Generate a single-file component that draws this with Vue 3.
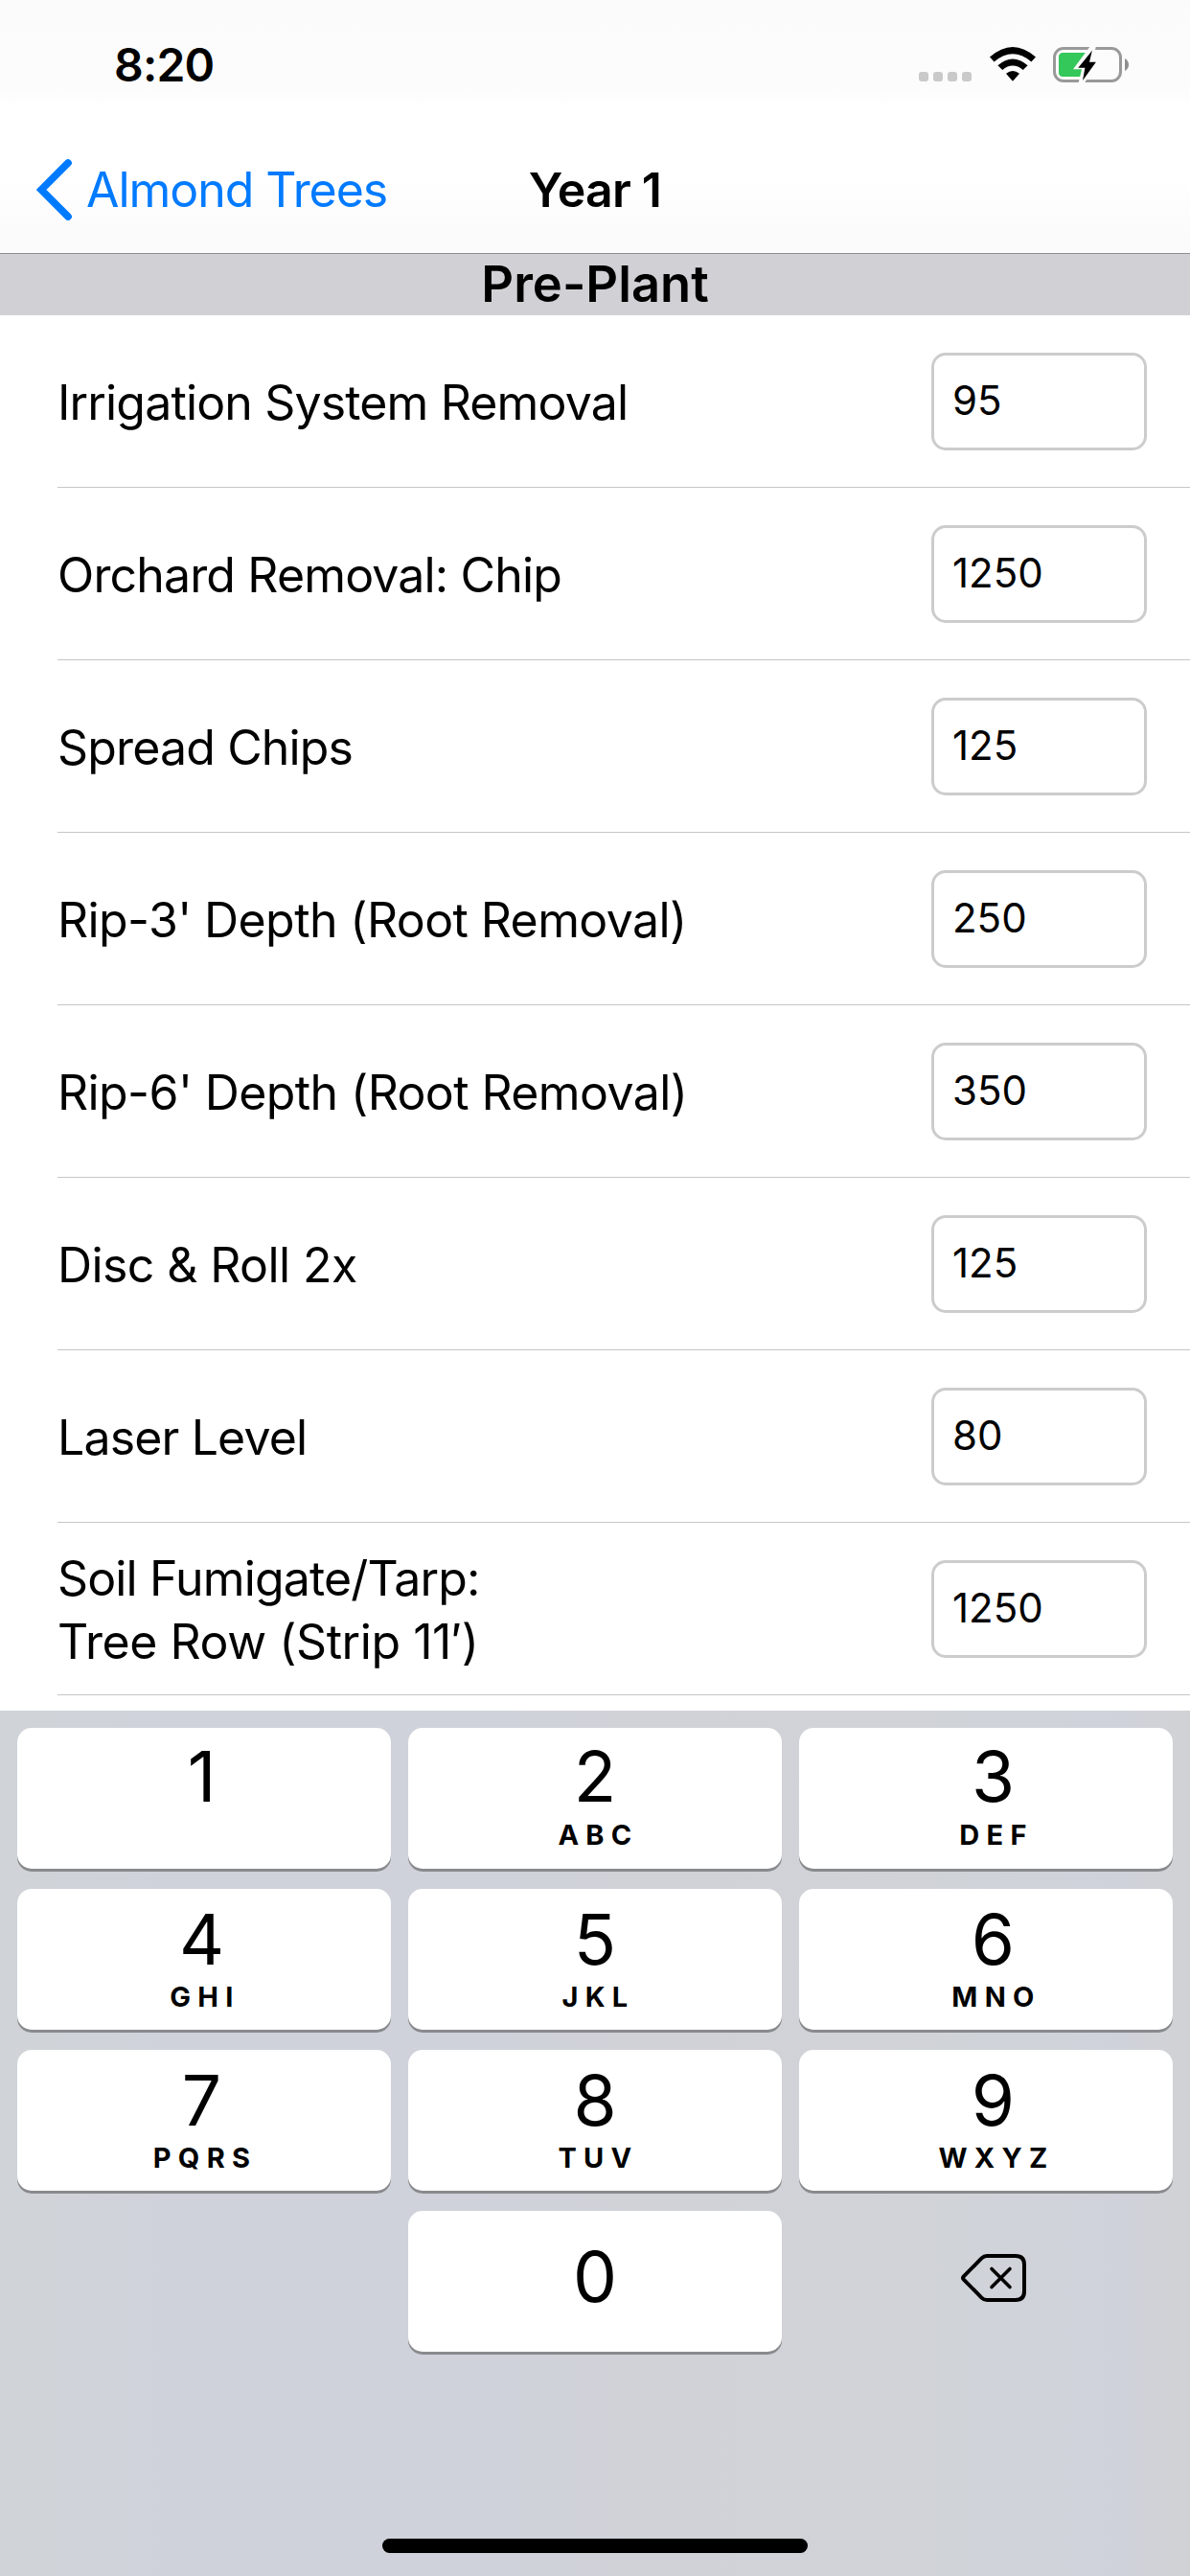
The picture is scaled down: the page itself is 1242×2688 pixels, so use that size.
<script setup>
const rows = [
  { lines: ['Irrigation System Removal'], value: '95' },
  { lines: ['Orchard Removal: Chip'], value: '1250' },
  { lines: ['Spread Chips'], value: '125' },
  { lines: ["Rip-3' Depth (Root Removal)"], value: '250', wide: true },
  { lines: ["Rip-6' Depth (Root Removal)"], value: '350', wide: true },
  { lines: ['Disc & Roll 2x'], value: '125', wide: true },
  { lines: ['Laser Level'], value: '80' },
  { lines: ['Soil Fumigate/Tarp:', 'Tree Row (Strip 11′)'], value: '1250' },
]
const keys = [
  ['1', ''], ['2', 'ABC'], ['3', 'DEF'],
  ['4', 'GHI'], ['5', 'JKL'], ['6', 'MNO'],
  ['7', 'PQRS'], ['8', 'TUV'], ['9', 'WXYZ'],
]
</script>

<template>
  <div class="screen">
    <header class="top">
      <div class="status">
        <span class="time">8:20</span>
        <div class="indicators">
          <div class="dots"><i v-for="n in 4" :key="n"></i></div>
          <svg class="wifi" width="48" height="36" viewBox="0 0 48 36">
            <path d="M0 10.6 Q24 -10.6 48 10.6 L43.4 15.4 Q24 -1 4.6 15.4Z" />
            <path d="M8.4 19.2 Q24 5.6 39.6 19.2 L34.8 24 Q24 15.2 13.2 24Z" />
            <path d="M17 27.8 Q24 22.2 31 27.8 L24.7 35 Q24 35.8 23.3 35Z" />
          </svg>
          <svg class="battery" width="80" height="38" viewBox="0 0 80 38">
            <rect x="1.5" y="1.5" width="69" height="34" rx="9.5" fill="none" stroke="#999" stroke-width="3" />
            <path d="M75 12 Q79 14.5 79 18.5 Q79 22.5 75 25Z" fill="#8f8f8f" />
            <path d="M10.5 6 H39 L31 31 H10.5 Q6 31 6 26.5 V10.5 Q6 6 10.5 6Z" fill="#34c759" />
            <path d="M39 -1 L21 23.2 H30 L26.5 38 H32.5 L49 13.5 H41.2 L45 -1Z" fill="#fcfcfc" />
            <path d="M40.9 3.7 L26.3 21.7 H33.4 L31 35 L44.9 15.7 H38Z" />
          </svg>
        </div>
      </div>
      <nav class="nav">
        <a class="back">
          <svg width="37" height="64" viewBox="0 0 37 64"><path d="M33 4 L5 32 L33 60" fill="none" stroke="#007aff" stroke-width="7.6" stroke-linecap="round" stroke-linejoin="miter" /></svg>
          <span>Almond Trees</span>
        </a>
        <h1>Year 1</h1>
        <span></span>
      </nav>
    </header>

    <h2 class="section">Pre-Plant</h2>

    <main class="list">
      <div v-for="row in rows" :key="row.lines[0]" class="row">
        <div class="label" :class="{ wide: row.wide }">
          <div v-for="line in row.lines" :key="line">{{ line }}</div>
        </div>
        <div class="field">{{ row.value }}</div>
      </div>
    </main>

    <section class="keyboard">
      <div class="keys">
        <button v-for="[digit, letters] in keys" :key="digit" class="key">
          <span class="digit">{{ digit }}</span>
          <span class="letters">{{ letters }}</span>
        </button>
        <div></div>
        <button class="key zero"><span class="digit">0</span></button>
        <div class="delete">
          <svg width="68" height="50" viewBox="0 0 68 50" fill="none" stroke="#000" stroke-linecap="round" stroke-linejoin="round">
            <path d="M27 2 H57 Q66 2 66 11 V39 Q66 48 57 48 H27 Q24 48 21.5 45.6 L2.8 26.6 Q1.3 25 2.8 23.4 L21.5 4.4 Q24 2 27 2Z" stroke-width="4" />
            <path d="M32 15.5 L51 34.5 M51 15.5 L32 34.5" stroke-width="3.6" />
          </svg>
        </div>
      </div>
      <div class="home"></div>
    </section>
  </div>
</template>

<style>
body { margin: 0; background: #fff; }
</style>

<style scoped>
* { box-sizing: border-box; }
.screen {
  width: 1242px;
  height: 2688px;
  display: flex;
  flex-direction: column;
  overflow: hidden;
  background: #fff;
  color: #000;
  font-family: Inter, "Liberation Sans", sans-serif;
}
.top {
  height: 265px;
  flex: none;
  border-bottom: 1px solid #8e8e93;
  background: linear-gradient(#fbfbfb, #fcfcfc 95px, #fff 112px, #fff 185px, #fbfbfb 240px);
}
.status {
  height: 132px;
  display: flex;
  justify-content: space-between;
  padding: 0 63px 0 119px;
}
.time {
  font-size: 48px;
  font-weight: 600;
  line-height: 136px;
  letter-spacing: -0.8px;
}
.indicators { display: flex; padding-top: 49px; }
.dots { display: flex; gap: 5px; padding-top: 26px; }
.dots i { width: 10px; height: 10px; border-radius: 3px; background: #c9c9c9; }
.wifi { margin-left: 19px; }
.battery { margin-left: 18px; }
.nav {
  height: 132px;
  display: grid;
  grid-template-columns: 1fr auto 1fr;
  align-items: center;
}
.back {
  display: flex;
  align-items: center;
  gap: 15px;
  padding-left: 38px;
  color: #007aff;
  font-size: 50px;
  letter-spacing: -1.05px;
  white-space: nowrap;
}
h1 { margin: 0; font-size: 50px; font-weight: 600; line-height: 60px; letter-spacing: -0.8px; }
.section {
  margin: 0;
  height: 64px;
  flex: none;
  background: #d1d0d5;
  text-align: center;
  font-size: 52.5px;
  font-weight: 600;
  line-height: 62px;
}
.list { height: 1456px; flex: none; overflow: hidden; }
.row {
  height: 180px;
  margin-left: 60px;
  padding-right: 45px;
  display: flex;
  align-items: center;
  justify-content: space-between;
  border-bottom: 1px solid #c6c6c8;
}
.label {
  padding-top: 3px;
  font-size: 50px;
  line-height: 66px;
  letter-spacing: -0.85px;
  white-space: nowrap;
}
.label.wide { letter-spacing: -0.6px; }
.label div + div { letter-spacing: -0.45px; }
.field {
  width: 225px;
  height: 102px;
  margin-top: 1px;
  border: 3px solid #ccc;
  border-radius: 15px;
  padding-left: 19px;
  font-size: 42px;
  line-height: 93px;
}
.keyboard {
  flex: 1;
  display: flex;
  flex-direction: column;
  justify-content: space-between;
  align-items: center;
  padding: 18px 0 24px;
  background: linear-gradient(90deg, #d0d3d7, #cfd2da 14%, #cfd2da 40%, #d1d2d7 60%, #d0d3d8 80%, #cfd2da 94%, #d1d2d5);
}
.keys {
  display: grid;
  grid-template-columns: repeat(3, 390px);
  grid-auto-rows: 147px;
  gap: 21px 18px;
}
.key {
  display: flex;
  flex-direction: column;
  align-items: center;
  border: 0;
  border-radius: 15px;
  padding: 0;
  background: #fff;
  box-shadow: 0 3px 0 #898a8d;
  color: #000;
  font-family: inherit;
}
.key:nth-child(3n + 1) { padding-right: 5px; }
.key:nth-child(3n) { padding-left: 15px; }
.digit { font-size: 73px; line-height: 80px; padding-top: 13px; height: 94px; }
.key:nth-child(-n + 3) .digit { padding-top: 11px; height: 93px; }
.letters {
  font-size: 29px;
  font-weight: 700;
  line-height: 38px;
  letter-spacing: 7.3px;
  margin-right: -7px;
}
.key.zero .digit { padding-top: 29px; height: 113px; }
.delete { display: flex; align-items: center; justify-content: center; padding-left: 15px; }
.delete svg { margin-bottom: 7px; }
.home { width: 444px; height: 15px; border-radius: 8px; background: #000; }
</style>
